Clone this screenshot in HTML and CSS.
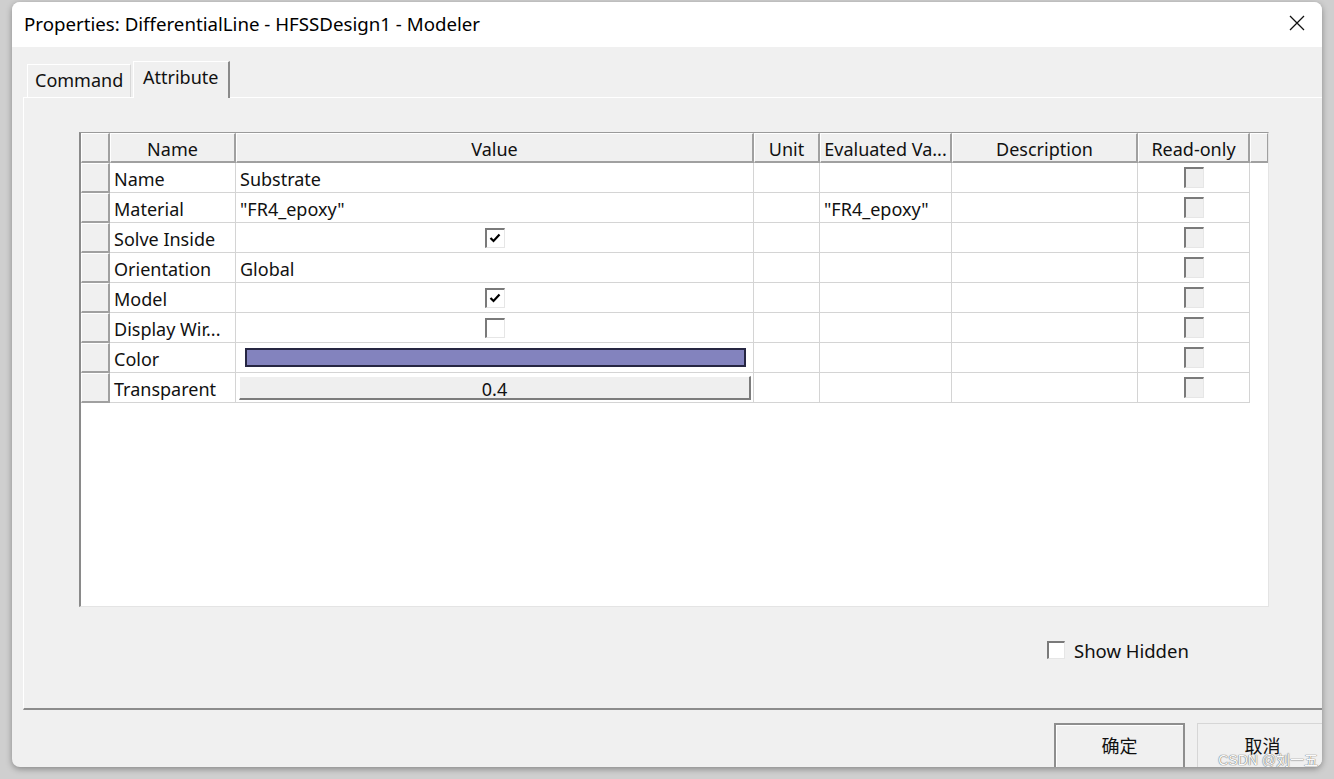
FILE: index.html
```html
<!DOCTYPE html>
<html>
<head>
<meta charset="utf-8">
<link rel="stylesheet" href="styles.css">
</head>
<body>
<div class="dialog">
  <div class="titlebar">
    <span class="title">Properties: DifferentialLine - HFSSDesign1 - Modeler</span>
    <svg class="close" width="16" height="16" viewBox="0 0 16 16"><path d="M1 1 L15 15 M15 1 L1 15" stroke="#111" stroke-width="1.3" fill="none"/></svg>
  </div>
  <div class="content">
    <div class="tabs">
      <div class="tab">Command</div>
      <div class="tab active">Attribute</div>
    </div>
    <div class="panel">
      <div class="frame">
        <div class="grid">
          <div class="hc rh"></div>
          <div class="hc">Name</div>
          <div class="hc">Value</div>
          <div class="hc">Unit</div>
          <div class="hc">Evaluated Va...</div>
          <div class="hc">Description</div>
          <div class="hc">Read-only</div>
          <div class="hc last"></div>

          <div class="rh"></div><div class="c">Name</div><div class="c">Substrate</div><div class="c"></div><div class="c"></div><div class="c"></div><div class="c ctr"><span class="ro"></span></div><div class="e"></div>
          <div class="rh"></div><div class="c">Material</div><div class="c">"FR4_epoxy"</div><div class="c"></div><div class="c">"FR4_epoxy"</div><div class="c"></div><div class="c ctr"><span class="ro"></span></div><div class="e"></div>
          <div class="rh"></div><div class="c">Solve Inside</div><div class="c ctr"><span class="cb"><svg width="12" height="10" viewBox="0 0 12 10"><path d="M1.5 5 L4.5 8 L10.5 1.5" stroke="#000" stroke-width="2.2" fill="none"/></svg></span></div><div class="c"></div><div class="c"></div><div class="c"></div><div class="c ctr"><span class="ro"></span></div><div class="e"></div>
          <div class="rh"></div><div class="c">Orientation</div><div class="c">Global</div><div class="c"></div><div class="c"></div><div class="c"></div><div class="c ctr"><span class="ro"></span></div><div class="e"></div>
          <div class="rh"></div><div class="c">Model</div><div class="c ctr"><span class="cb"><svg width="12" height="10" viewBox="0 0 12 10"><path d="M1.5 5 L4.5 8 L10.5 1.5" stroke="#000" stroke-width="2.2" fill="none"/></svg></span></div><div class="c"></div><div class="c"></div><div class="c"></div><div class="c ctr"><span class="ro"></span></div><div class="e"></div>
          <div class="rh"></div><div class="c">Display Wir...</div><div class="c ctr"><span class="cb"></span></div><div class="c"></div><div class="c"></div><div class="c"></div><div class="c ctr"><span class="ro"></span></div><div class="e"></div>
          <div class="rh"></div><div class="c">Color</div><div class="c colorcell"><span class="swatch"></span></div><div class="c"></div><div class="c"></div><div class="c"></div><div class="c ctr"><span class="ro"></span></div><div class="e"></div>
          <div class="rh"></div><div class="c">Transparent</div><div class="c btncell"><span class="valbtn">0.4</span></div><div class="c"></div><div class="c"></div><div class="c"></div><div class="c ctr"><span class="ro"></span></div><div class="e"></div>
        </div>
      </div>
      <div class="hidden-row">
        <span class="cb plain"></span>
        <span class="hidden-label">Show Hidden</span>
      </div>
    </div>
    <div class="footer">
      <div class="btn default"><span class="btn-label">确定</span></div>
      <div class="btn"><span class="btn-label">取消</span></div>
    </div>
  </div>
  <div class="watermark">CSDN @刘一五</div>
</div>
</body>
</html>
```
FILE: styles.css
```css
html, body {
  margin: 0;
  padding: 0;
}
body {
  width: 1334px;
  height: 779px;
  overflow: hidden;
  background: #cfcfcf;
  font-family: "Noto Sans", "Noto Sans CJK SC", sans-serif;
  color: #000;
}
.dialog {
  position: relative;
  margin: 2px 0 0 12px;
  width: 1310px;
  height: 765px;
  border-radius: 8px;
  overflow: hidden;
  background: #f0f0f0;
  box-shadow: 0 2px 6px rgba(0,0,0,0.35);
  display: flex;
  flex-direction: column;
}
.titlebar {
  height: 45px;
  background: #fff;
  display: flex;
  align-items: center;
  justify-content: space-between;
  padding: 0 17px 0 12px;
  flex: none;
}
.title {
  font-size: 18.7px;
  margin-top: -3px;
}
.close {
  margin-top: -3px;
}
.content {
  flex: 1;
  display: flex;
  flex-direction: column;
  padding: 14px 0 0 11px;
}
.tabs {
  display: flex;
  align-items: flex-end;
  padding-left: 4px;
  height: 36px;
  flex: none;
  position: relative;
  z-index: 1;
}
.tab {
  height: 33px;
  box-sizing: border-box;
  padding: 0 7px 0 7px;
  font-size: 18px;
  line-height: 31px;
  border-top: 1px solid #fff;
  border-left: 1px solid #fff;
  border-right: 1px solid #d8d8d8;
  width: 104px;
  color: #111;
}
.tab.active {
  height: 37px;
  width: 97px;
  margin-left: 2px;
  margin-bottom: -1px;
  line-height: 31px;
  padding-left: 9px;
  border-right: 2px solid #8a8a8a;
  background: #f0f0f0;
}
.panel {
  flex: none;
  height: 613px;
  box-sizing: border-box;
  border-top: 1px solid #fff;
  border-left: 1px solid #fff;
  border-bottom: 2px solid #8c8c8c;
  padding: 34px 0 0 55px;
}
.frame {
  width: 1190px;
  height: 475px;
  box-sizing: border-box;
  background: #fff;
  border-top: 1px solid #9a9a9a;
  border-left: 2px solid #8a8a8a;
  border-right: 1px solid #e4e4e4;
  border-bottom: 1px solid #e4e4e4;
}
.grid {
  display: grid;
  grid-template-columns: 29px 126px 518px 66px 132px 186px 112px 18px;
  grid-auto-rows: 30px;
  font-size: 18px;
}
.hc {
  background: #f0f0f0;
  box-sizing: border-box;
  border-top: 1px solid #fff;
  border-left: 1px solid #fff;
  border-right: 2px solid #a0a0a0;
  border-bottom: 2px solid #a0a0a0;
  text-align: center;
  line-height: 31px;
  white-space: nowrap;
  overflow: hidden;
  color: #111;
}
.hc.last {
  border-right: 1px solid #a0a0a0;
}
.rh {
  background: #f0f0f0;
  box-sizing: border-box;
  border-top: 1px solid #fff;
  border-left: 1px solid #fff;
  border-right: 2px solid #a0a0a0;
  border-bottom: 2px solid #a0a0a0;
}
.c {
  box-sizing: border-box;
  border-right: 1px solid #d4d4d4;
  border-bottom: 1px solid #d4d4d4;
  padding-left: 4px;
  line-height: 33px;
  white-space: nowrap;
  overflow: hidden;
  color: #111;
}
.e {
  background: #fff;
}
.ctr {
  display: flex;
  align-items: center;
  justify-content: center;
  padding-left: 0;
}
.cb {
  width: 20px;
  height: 20px;
  box-sizing: border-box;
  background: #fff;
  border-top: 2px solid #7a7a7a;
  border-left: 2px solid #7a7a7a;
  border-right: 1px solid #e6e6e6;
  border-bottom: 1px solid #e6e6e6;
  display: flex;
  align-items: center;
  justify-content: center;
}
.ro {
  width: 20px;
  height: 21px;
  box-sizing: border-box;
  background: #f0f0f0;
  border-top: 2px solid #7a7a7a;
  border-left: 2px solid #7a7a7a;
  border-right: 1px solid #e6e6e6;
  border-bottom: 1px solid #e6e6e6;
  margin-left: 1px;
}
.colorcell {
  padding: 5px 7px 0 9px;
}
.swatch {
  display: block;
  height: 19px;
  box-sizing: border-box;
  background: #8383be;
  border: 2px solid #262642;
}
.btncell {
  padding: 3px 2px 0 3px;
}
.valbtn {
  display: block;
  height: 24px;
  box-sizing: border-box;
  background: #efefef;
  border-top: 1px solid #fff;
  border-left: 1px solid #fff;
  border-right: 2px solid #7c7c7c;
  border-bottom: 2px solid #7c7c7c;
  text-align: center;
  line-height: 24px;
  font-size: 18px;
  color: #111;
}
.hidden-row {
  display: flex;
  align-items: center;
  margin-top: 34px;
  padding-left: 968px;
  height: 18px;
}
.cb.plain {
  width: 18px;
  height: 18px;
}
.hidden-label {
  margin-left: 9px;
  font-size: 18.5px;
  color: #111;
}
.footer {
  flex: 1;
  display: flex;
  align-items: flex-start;
  padding: 13px 0 0 1031px;
  gap: 12px;
}
.btn {
  flex: none;
  width: 131px;
  height: 46px;
  box-sizing: border-box;
  border: 1px solid #d6d6d6;
  background: #f0f0f0;
  font-family: "Noto Sans CJK SC", sans-serif;
  font-size: 18px;
  text-align: center;
  color: #111;
  padding-top: 8px;
}
.btn-label {
  display: inline-block;
  line-height: 18px;
  height: 18px;
}
.btn.default {
  border: 2px solid #8e8e8e;
  box-shadow: inset 1px 1px 0 #fff;
  padding-top: 7px;
}
.watermark {
  position: absolute;
  right: 4px;
  bottom: 0;
  line-height: 14px;
  font-family: "Liberation Sans", "Noto Sans CJK SC", sans-serif;
  font-size: 14px;
  color: #fafafa;
  text-shadow: 0 0 1px #666, 0 0 1px #666;
}
```
